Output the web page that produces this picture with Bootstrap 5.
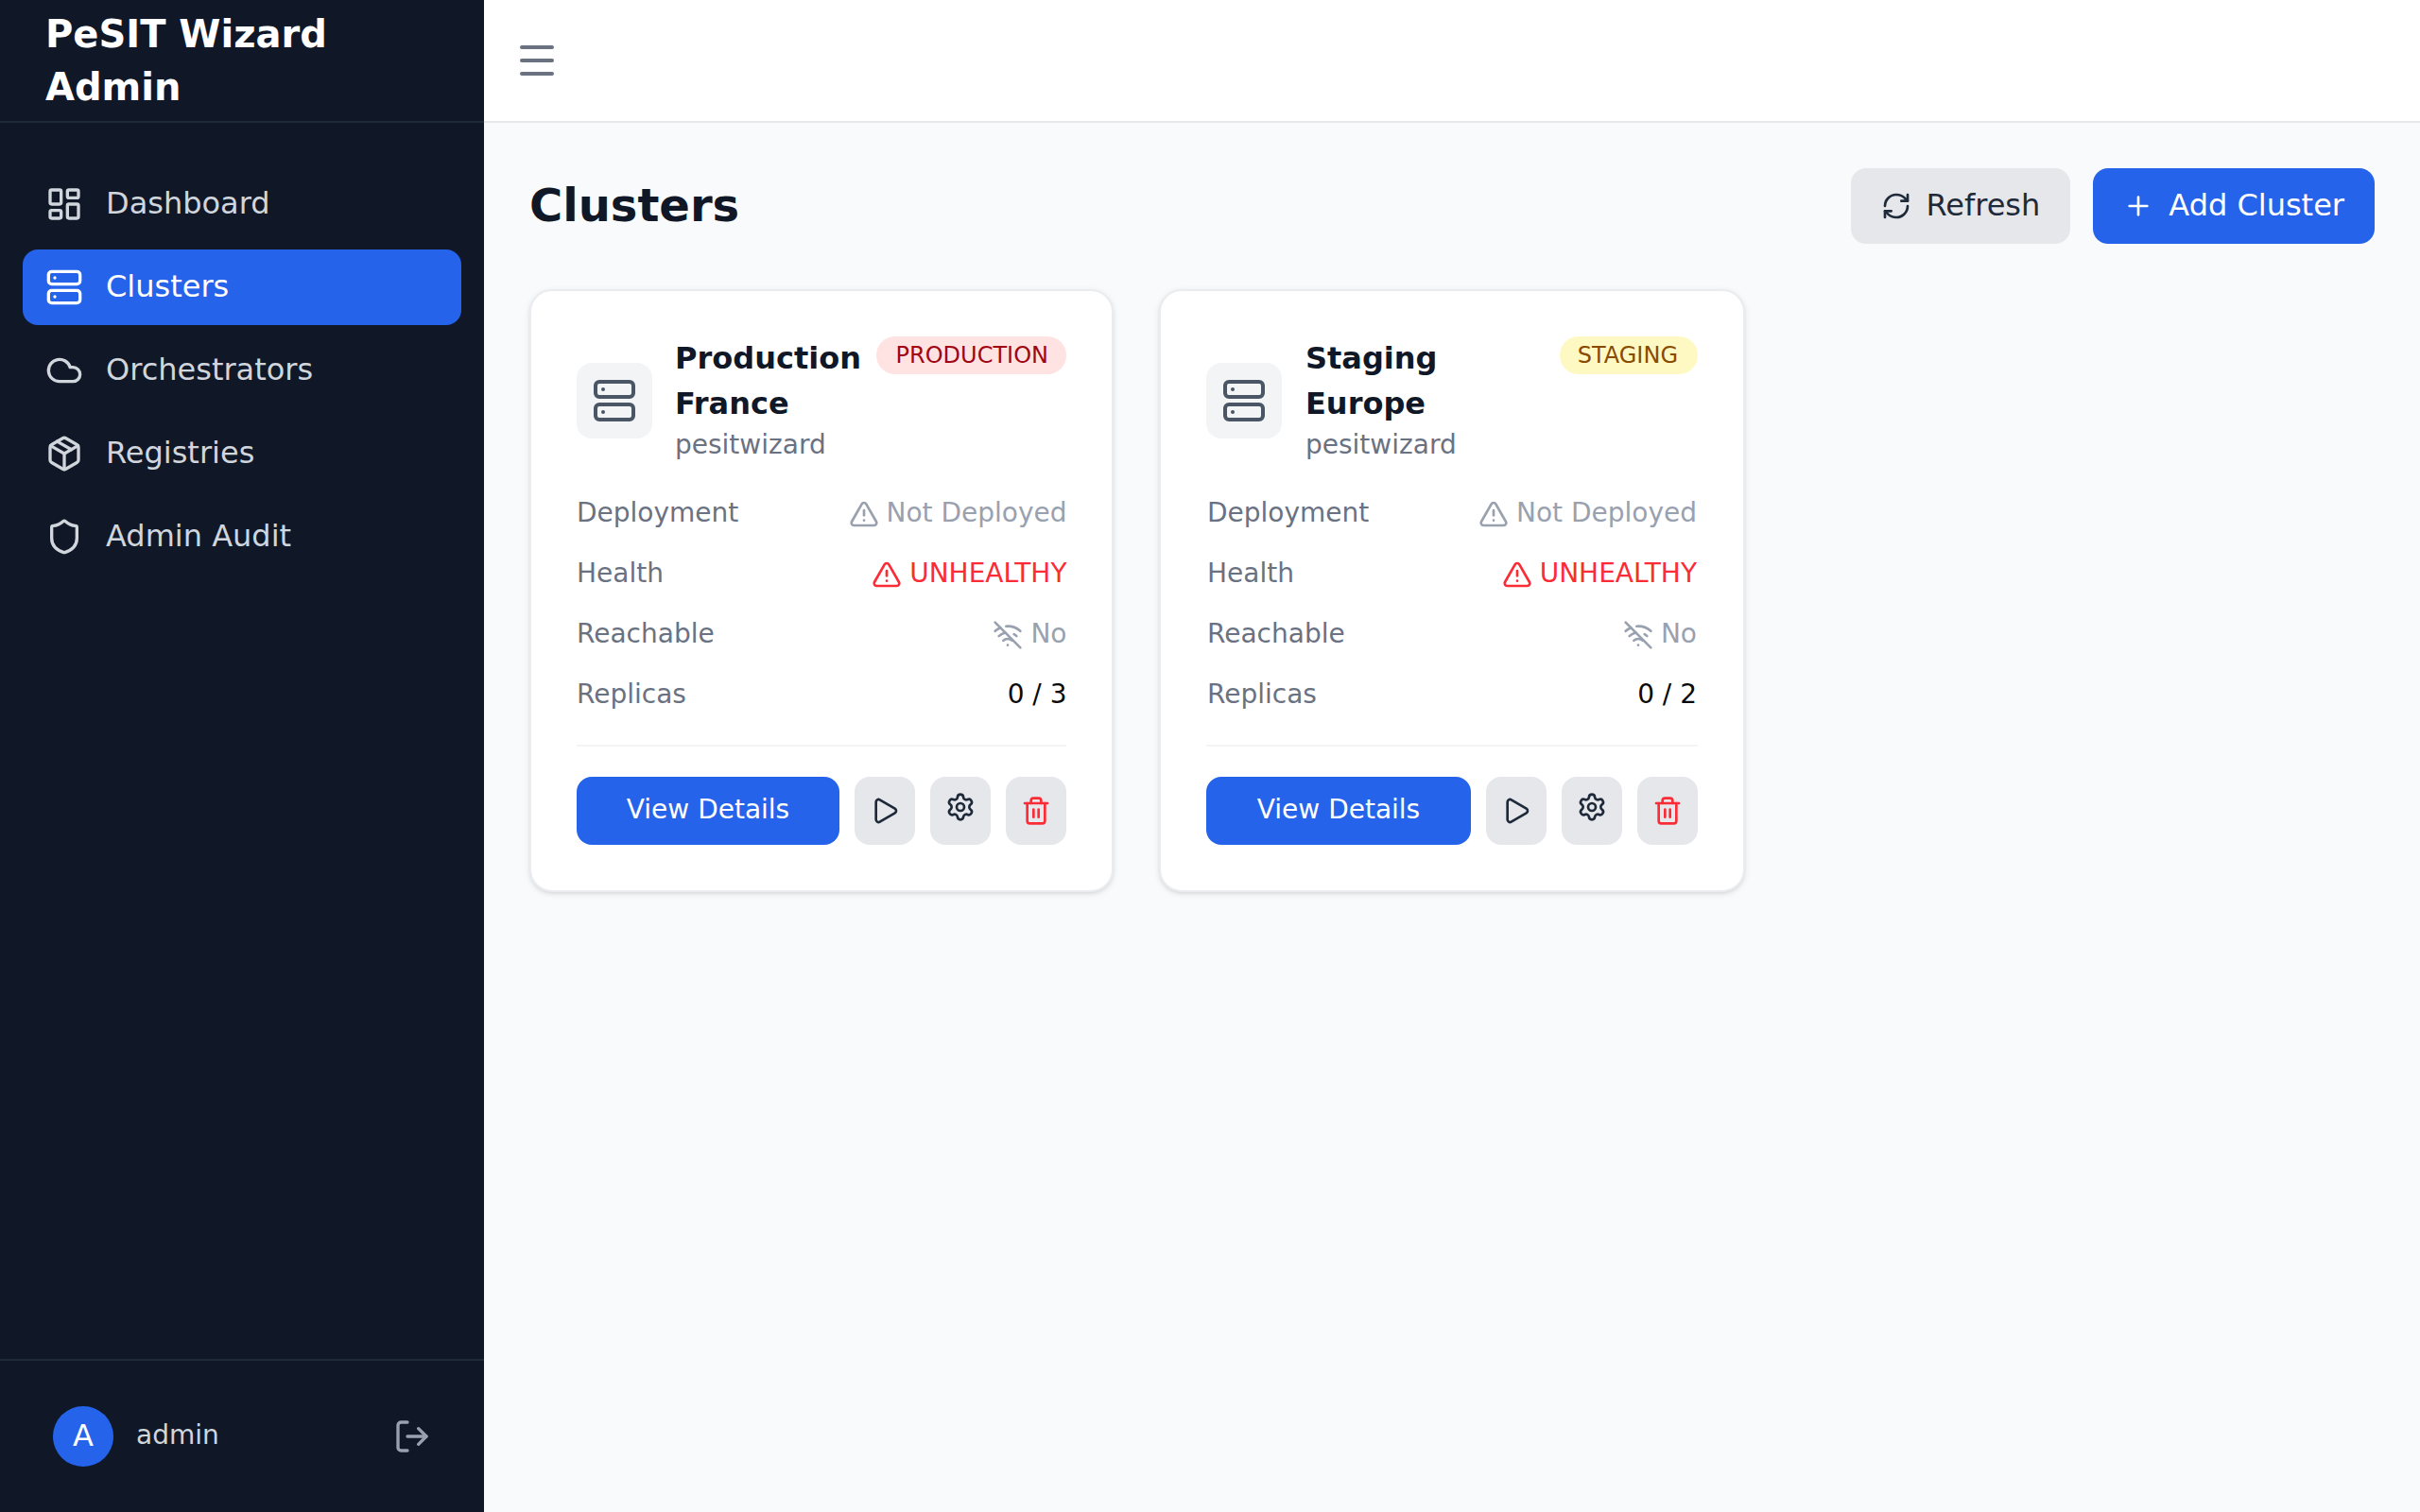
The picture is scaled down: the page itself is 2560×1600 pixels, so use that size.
<!DOCTYPE html>
<html lang="en">
<head>
<meta charset="utf-8">
<title>Clusters - PeSIT Wizard Admin</title>
<link rel="stylesheet" href="https://cdn.jsdelivr.net/npm/bootstrap@5.3.0/dist/css/bootstrap.min.css">
<style>
body{font-family:"DejaVu Sans",sans-serif;background:#f9fafb;font-size:32px;line-height:48px;color:#101828}
.shell{height:100vh;overflow:hidden}
.tx{display:block;transform:translateY(-1px)}
.ico{stroke:currentColor;fill:none;stroke-width:2;stroke-linecap:round;stroke-linejoin:round;flex-shrink:0;display:block}
.i32{width:32px;height:32px}.i40{width:40px;height:40px}.i48{width:48px;height:48px}
.gear-ic{margin-bottom:8px}
.side{width:512px;flex-shrink:0;background:#101828}
.side-head{height:130px;padding:0 48px;border-bottom:2px solid #1e2939;font-size:40px;line-height:56px;font-weight:700;color:#fff}
.side-nav{padding:46px 24px;gap:8px}
.nav-item-x{height:80px;padding:0 24px;gap:24px;border-radius:16px;color:#d1d5dc;text-decoration:none}
.nav-item-x.on{background:#2563eb;color:#fff}
.side-foot{border-top:2px solid #1e2939;padding:48px 56px}
.avatar{width:64px;height:64px;background:#2563eb;color:#fff}
.who{font-size:28px;line-height:40px;color:#d1d5dc;margin-left:24px}
.logout{color:#99a1af}
.top{height:130px;background:#fff;border-bottom:2px solid #e5e7eb;padding:0 32px;color:#6a7282}
.page{padding:48px}
.page-head{margin-bottom:48px;height:80px}
.page-title{font-size:48px;line-height:64px;font-weight:700;color:#101828;margin:0}
.b{height:80px;padding:0 32px;gap:16px;font-size:32px;line-height:48px;border-radius:16px;border:0}
.b-gray,.b-gray:hover{background:#e5e7eb;color:#1e2939;gap:15px}
.b-blue,.b-blue:hover{background:#2563eb;color:#fff}
.grid-x{display:grid;grid-template-columns:618px 620px;column-gap:48px;align-items:start}
.ccard{background:#fff;border:2px solid #eaecf0;border-radius:24px;padding:48px;box-shadow:0 2px 6px rgba(0,0,0,.1),0 2px 4px -2px rgba(0,0,0,.1)}
.chead{margin-bottom:32px;gap:8px}
.cicon{width:80px;height:80px;background:#f3f4f6;border-radius:16px;color:#4a5565;flex-shrink:0}
.cname{font-size:32px;line-height:48px;font-weight:700;color:#101828}
.csub{font-size:28px;line-height:40px;color:#6a7282}
.pill{font-size:24px;line-height:32px;padding:4px 20px;border-radius:999px;flex-shrink:0}
.pill-prod{background:#ffe2e2;color:#9f0712;padding-left:21px;padding-right:19px}
.pill-stag{background:#fef9c2;color:#894b00;padding-left:19px;padding-right:21px}
.rows{gap:24px;font-size:28px;line-height:40px;color:#6a7282}
.rows-a{margin-right:-.5px}
.rows-b{margin:0 1px}
.nudge{padding-left:1px}
.val{gap:8px}
.val-gray{color:#99a1af}.val-red{color:#fb2c36}.val-dark{color:#0a0a0a}
.cfoot{margin-top:32px;padding-top:32px;border-top:2px solid #f3f4f6;gap:16px}
.act{height:72px;border-radius:16px;border:0;font-size:28px;line-height:40px;padding:0}
.act-main,.act-main:hover{background:#2563eb;color:#fff}
.act-ic,.act-ic:hover{width:64px;background:#e5e7eb;color:#1e2939}
.act-del,.act-del:hover{color:#fb2c36}
</style>
</head>
<body>
<svg class="d-none" xmlns="http://www.w3.org/2000/svg">
<symbol id="i-dash" viewBox="0 0 24 24"><rect width="7" height="9" x="3" y="3" rx="1"/><rect width="7" height="5" x="14" y="3" rx="1"/><rect width="7" height="9" x="14" y="12" rx="1"/><rect width="7" height="5" x="3" y="16" rx="1"/></symbol>
<symbol id="i-server" viewBox="0 0 24 24"><rect width="20" height="8" x="2" y="2" rx="2"/><rect width="20" height="8" x="2" y="14" rx="2"/><path d="M6 6h.01"/><path d="M6 18h.01"/></symbol>
<symbol id="i-cloud" viewBox="0 0 24 24"><path d="M17.5 19H9a7 7 0 1 1 6.71-9h1.79a4.5 4.5 0 1 1 0 9Z"/></symbol>
<symbol id="i-pack" viewBox="0 0 24 24"><path d="M11 21.73a2 2 0 0 0 2 0l7-4A2 2 0 0 0 21 16V8a2 2 0 0 0-1-1.73l-7-4a2 2 0 0 0-2 0l-7 4A2 2 0 0 0 3 8v8a2 2 0 0 0 1 1.73z"/><path d="M12 22V12"/><path d="m3.3 7 8.7 5 8.7-5"/><path d="m7.5 4.27 9 5.15"/></symbol>
<symbol id="i-shield" viewBox="0 0 24 24"><path d="M20 13c0 5-3.5 7.5-7.66 8.95a1 1 0 0 1-.67-.01C7.5 20.5 4 18 4 13V6a1 1 0 0 1 1-1c2 0 4.5-1.2 6.24-2.72a1.17 1.17 0 0 1 1.52 0C14.51 3.81 17 5 19 5a1 1 0 0 1 1 1z"/></symbol>
<symbol id="i-logout" viewBox="0 0 24 24"><path d="M9 21H5a2 2 0 0 1-2-2V5a2 2 0 0 1 2-2h4"/><path d="m16 17 5-5-5-5"/><path d="M21 12H9"/></symbol>
<symbol id="i-menu" viewBox="0 0 24 24"><path d="M4 5h16"/><path d="M4 12h16"/><path d="M4 19h16"/></symbol>
<symbol id="i-refresh" viewBox="0 0 24 24"><path d="M3 12a9 9 0 0 1 9-9 9.75 9.75 0 0 1 6.74 2.74L21 8"/><path d="M21 3v5h-5"/><path d="M21 12a9 9 0 0 1-9 9 9.75 9.75 0 0 1-6.74-2.74L3 16"/><path d="M8 16H3v5"/></symbol>
<symbol id="i-plus" viewBox="0 0 24 24"><path d="M5 12h14"/><path d="M12 5v14"/></symbol>
<symbol id="i-alert" viewBox="0 0 24 24"><path d="m21.73 18-8-14a2 2 0 0 0-3.48 0l-8 14A2 2 0 0 0 4 21h16a2 2 0 0 0 1.73-3"/><path d="M12 9v4"/><path d="M12 17h.01"/></symbol>
<symbol id="i-wifi" viewBox="0 0 24 24"><path d="M12 20h.01"/><path d="M8.5 16.429a5 5 0 0 1 7 0"/><path d="M5 12.859a10 10 0 0 1 5.17-2.69"/><path d="M19 12.859a10 10 0 0 0-2.007-1.523"/><path d="M2 8.82a15 15 0 0 1 4.177-2.643"/><path d="M22 8.82a15 15 0 0 0-11.288-3.764"/><path d="m2 2 20 20"/></symbol>
<symbol id="i-play" viewBox="0 0 24 24"><path d="M5 5a2 2 0 0 1 3.008-1.728l11.997 6.998a2 2 0 0 1 .003 3.458l-12 7A2 2 0 0 1 5 19z"/></symbol>
<symbol id="i-gear" viewBox="0 0 24 24"><path d="M9.671 4.136a2.34 2.34 0 0 1 4.659 0 2.34 2.34 0 0 0 3.319 1.915 2.34 2.34 0 0 1 2.33 4.033 2.34 2.34 0 0 0 0 3.831 2.34 2.34 0 0 1-2.33 4.033 2.34 2.34 0 0 0-3.319 1.915 2.34 2.34 0 0 1-4.659 0 2.34 2.34 0 0 0-3.32-1.915 2.34 2.34 0 0 1-2.33-4.033 2.34 2.34 0 0 0 0-3.831A2.34 2.34 0 0 1 6.35 6.051a2.34 2.34 0 0 0 3.319-1.915"/><circle cx="12" cy="12" r="3"/></symbol>
<symbol id="i-trash" viewBox="0 0 24 24"><path d="M10 11v6"/><path d="M14 11v6"/><path d="M19 6v14a2 2 0 0 1-2 2H7a2 2 0 0 1-2-2V6"/><path d="M3 6h18"/><path d="M8 6V4a2 2 0 0 1 2-2h4a2 2 0 0 1 2 2v2"/></symbol>
</svg>

<div class="shell d-flex">
  <aside class="side d-flex flex-column">
    <div class="side-head d-flex align-items-center">PeSIT Wizard Admin</div>
    <nav class="side-nav d-flex flex-column flex-grow-1">
      <a class="nav-item-x d-flex align-items-center" href="#"><svg class="ico i40"><use href="#i-dash"/></svg><span class="tx">Dashboard</span></a>
      <a class="nav-item-x on d-flex align-items-center" href="#"><svg class="ico i40"><use href="#i-server"/></svg><span class="tx">Clusters</span></a>
      <a class="nav-item-x d-flex align-items-center" href="#"><svg class="ico i40"><use href="#i-cloud"/></svg><span class="tx">Orchestrators</span></a>
      <a class="nav-item-x d-flex align-items-center" href="#"><svg class="ico i40"><use href="#i-pack"/></svg><span class="tx">Registries</span></a>
      <a class="nav-item-x d-flex align-items-center" href="#"><svg class="ico i40"><use href="#i-shield"/></svg><span class="tx">Admin Audit</span></a>
    </nav>
    <div class="side-foot d-flex align-items-center justify-content-between">
      <div class="d-flex align-items-center">
        <div class="avatar rounded-circle d-flex align-items-center justify-content-center"><span class="tx">A</span></div>
        <span class="who tx">admin</span>
      </div>
      <svg class="ico i40 logout"><use href="#i-logout"/></svg>
    </div>
  </aside>
  <div class="flex-grow-1 d-flex flex-column min-w-0">
    <header class="top d-flex align-items-center"><svg class="ico i48"><use href="#i-menu"/></svg></header>
    <main class="page flex-grow-1">
      <div class="page-head d-flex align-items-center justify-content-between">
        <h1 class="page-title tx">Clusters</h1>
        <div class="d-flex gap-4">
          <button class="btn b b-gray d-flex align-items-center"><svg class="ico i32"><use href="#i-refresh"/></svg><span class="tx">Refresh</span></button>
          <button class="btn b b-blue d-flex align-items-center"><svg class="ico i32"><use href="#i-plus"/></svg><span class="tx">Add Cluster</span></button>
        </div>
      </div>
      <div class="grid-x">
        <div class="ccard">
          <div class="chead d-flex align-items-start justify-content-between">
            <div class="d-flex align-items-center gap-4">
              <div class="cicon d-flex align-items-center justify-content-center"><svg class="ico i48"><use href="#i-server"/></svg></div>
              <div><div class="cname tx">Production France</div><div class="csub tx">pesitwizard</div></div>
            </div>
            <span class="pill pill-prod">PRODUCTION</span>
          </div>
          <div class="rows rows-a d-flex flex-column">
            <div class="d-flex justify-content-between"><span class="tx">Deployment</span><span class="val val-gray d-flex align-items-center"><svg class="ico i32"><use href="#i-alert"/></svg><span class="tx">Not Deployed</span></span></div>
            <div class="d-flex justify-content-between"><span class="tx">Health</span><span class="val val-red d-flex align-items-center"><svg class="ico i32"><use href="#i-alert"/></svg><span class="tx">UNHEALTHY</span></span></div>
            <div class="d-flex justify-content-between"><span class="tx">Reachable</span><span class="val val-gray d-flex align-items-center"><svg class="ico i32"><use href="#i-wifi"/></svg><span class="tx">No</span></span></div>
            <div class="d-flex justify-content-between"><span class="tx">Replicas</span><span class="val-dark tx">0 / 3</span></div>
          </div>
          <div class="cfoot d-flex">
            <button class="btn act act-main flex-grow-1"><span class="tx">View Details</span></button>
            <button class="btn act act-ic d-flex align-items-center justify-content-center"><svg class="ico i32"><use href="#i-play"/></svg></button>
            <button class="btn act act-ic d-flex align-items-center justify-content-center"><svg class="ico i32 gear-ic"><use href="#i-gear"/></svg></button>
            <button class="btn act act-ic act-del d-flex align-items-center justify-content-center"><svg class="ico i32"><use href="#i-trash"/></svg></button>
          </div>
        </div>
        <div class="ccard">
          <div class="chead d-flex align-items-start justify-content-between">
            <div class="d-flex align-items-center gap-4">
              <div class="cicon d-flex align-items-center justify-content-center"><svg class="ico i48"><use href="#i-server"/></svg></div>
              <div class="nudge"><div class="cname tx">Staging Europe</div><div class="csub tx">pesitwizard</div></div>
            </div>
            <span class="pill pill-stag">STAGING</span>
          </div>
          <div class="rows rows-b d-flex flex-column">
            <div class="d-flex justify-content-between"><span class="tx">Deployment</span><span class="val val-gray d-flex align-items-center"><svg class="ico i32"><use href="#i-alert"/></svg><span class="tx">Not Deployed</span></span></div>
            <div class="d-flex justify-content-between"><span class="tx">Health</span><span class="val val-red d-flex align-items-center"><svg class="ico i32"><use href="#i-alert"/></svg><span class="tx">UNHEALTHY</span></span></div>
            <div class="d-flex justify-content-between"><span class="tx">Reachable</span><span class="val val-gray d-flex align-items-center"><svg class="ico i32"><use href="#i-wifi"/></svg><span class="tx">No</span></span></div>
            <div class="d-flex justify-content-between"><span class="tx">Replicas</span><span class="val-dark tx">0 / 2</span></div>
          </div>
          <div class="cfoot d-flex">
            <button class="btn act act-main flex-grow-1"><span class="tx">View Details</span></button>
            <button class="btn act act-ic d-flex align-items-center justify-content-center"><svg class="ico i32"><use href="#i-play"/></svg></button>
            <button class="btn act act-ic d-flex align-items-center justify-content-center"><svg class="ico i32 gear-ic"><use href="#i-gear"/></svg></button>
            <button class="btn act act-ic act-del d-flex align-items-center justify-content-center"><svg class="ico i32"><use href="#i-trash"/></svg></button>
          </div>
        </div>
      </div>
    </main>
  </div>
</div>
<script src="https://cdn.jsdelivr.net/npm/bootstrap@5.3.0/dist/js/bootstrap.bundle.min.js"></script>
</body>
</html>
